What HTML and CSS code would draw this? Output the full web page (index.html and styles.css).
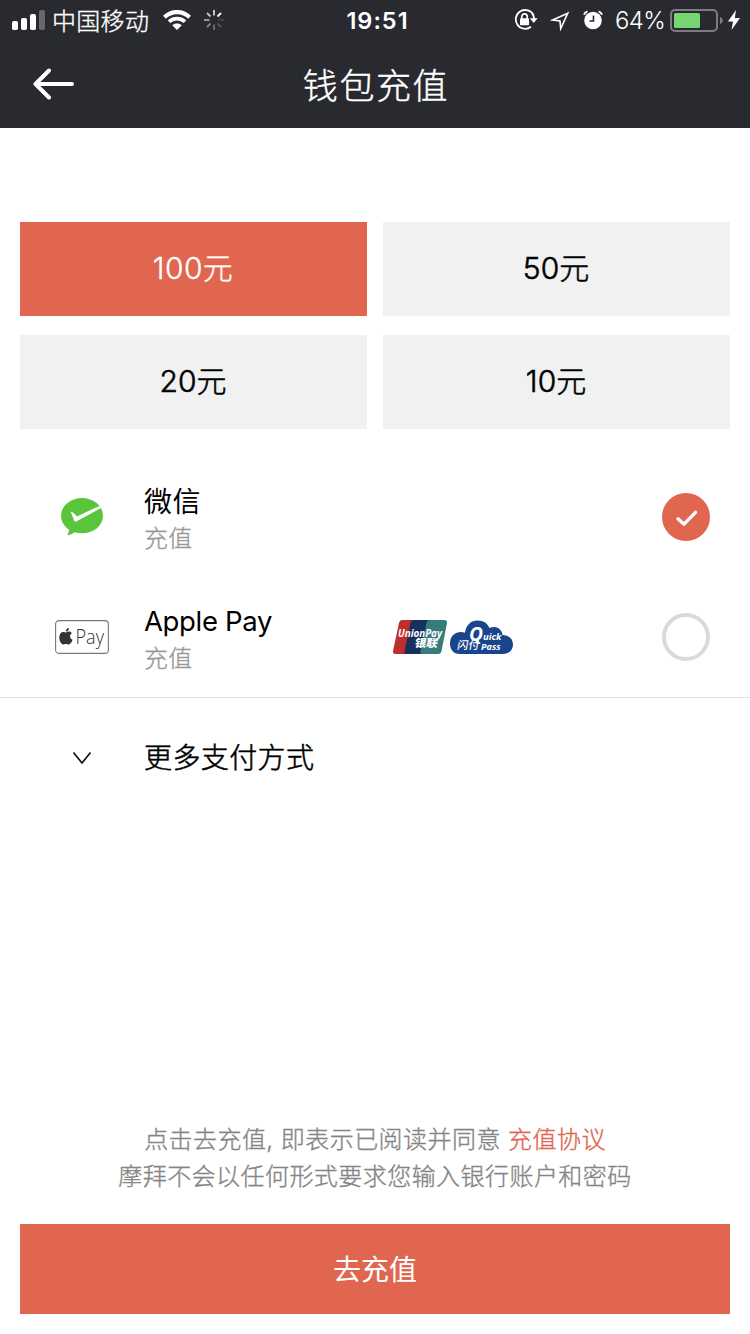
FILE: index.html
```
<!DOCTYPE html>
<html lang="zh-CN">
<head>
<meta charset="utf-8">
<title>钱包充值</title>
<link rel="stylesheet" href="styles.css">
</head>
<body>
<main class="screen">
  <header class="header">
    <div class="status">
      <div class="status-side">
        <svg class="signal" width="34" height="20" viewBox="0 0 34 20" fill="#fff"><rect x="0" y="11" width="6" height="9" rx="1.8"/><rect x="9" y="8" width="6" height="12" rx="1.8"/><rect x="18" y="4" width="6" height="16" rx="1.8"/><rect x="27" y="0" width="6" height="20" rx="1.8" fill="#67686c"/></svg>
        <span class="carrier">中国移动</span>
        <svg class="wifi" width="28" height="20" viewBox="0 0 28 20"><path d="M1.400 7.200C8.500 .3 19.500 .3 26.600 7.200" fill="none" stroke="#fff" stroke-width="4.200"/><path d="M6 11.600C10.500 7.600 17.500 7.600 22 11.600" fill="none" stroke="#fff" stroke-width="3.600"/><path d="M14 20L9.200 15.300C11.800 12.900 16.200 12.900 18.800 15.300Z" fill="#fff"/></svg>
        <svg class="spinner" width="20" height="20" viewBox="-10 -10 20 20" stroke="#fff" stroke-width="1.800"><path d="M0-10V-4.500" opacity=".8"/><path d="M7-7L3.500-3.500"/><path d="M10 0H4.500" opacity=".13"/><path d="M7 7L3.500 3.500" opacity=".2"/><path d="M0 10V4.500" opacity=".32"/><path d="M-7 7L-3.500 3.500" opacity=".43"/><path d="M-10 0H-4.500" opacity=".55"/><path d="M-7-7L-3.500-3.500" opacity=".72"/></svg>
      </div>
      <span class="clock">19:51</span>
      <div class="status-side status-right">
        <svg class="lock" width="24" height="22" viewBox="0 0 24 22"><path d="M19.600 6.200A9.400 9.400 0 1 0 17 17.800M18 4.200A9.400 9.400 0 0 1 20.100 10" fill="none" stroke="#fff" stroke-width="1.800"/><path d="M15.800 9.300H23.600L19.800 14Z" fill="#fff"/><rect x="6" y="9.300" width="9" height="7" rx=".8" fill="#fff"/><path d="M7.800 10V7.500A2.700 2.700 0 0 1 13.200 7.500V10" fill="none" stroke="#fff" stroke-width="1.700"/></svg>
        <svg class="location" width="20" height="21" viewBox="0 0 20 21"><path d="M17.800 3.200L2.500 10.100L10 11L10.700 18.600Z" fill="none" stroke="#fff" stroke-width="1.600" stroke-linejoin="miter"/></svg>
        <svg class="alarm" width="20" height="20" viewBox="0 0 20 20"><circle cx="10" cy="10.500" r="8.800" fill="#fff"/><path d="M1 4.700A5 5 0 0 1 4.500 1.400M15.500 1.400A5 5 0 0 1 19 4.700" fill="none" stroke="#fff" stroke-width="2"/><path d="M10.500 5.500V11H6.500" fill="none" stroke="#292a2f" stroke-width="1.600"/></svg>
        <span class="percent">64%</span>
        <svg class="battery" width="53" height="24" viewBox="0 0 53 24"><rect x="1" y="2" width="46" height="21" rx="4" fill="none" stroke="#7c7d80" stroke-width="2"/><rect x="4" y="5" width="26" height="15" rx="1.500" fill="#77d572"/><path d="M50 9C53.700 10 53.700 15 50 16Z" fill="#7c7d80"/></svg>
        <svg class="bolt" width="12" height="20" viewBox="0 0 12 20"><path d="M8 0L0 11.500H5L3.500 20L12 8H6.800Z" fill="#fff"/></svg>
      </div>
    </div>
    <div class="nav">
      <svg class="back" width="42" height="32" viewBox="0 0 42 32"><path d="M39 16H3M16 2.500L2.500 16L16 29.500" fill="none" stroke="#fff" stroke-width="4" stroke-linecap="round" stroke-linejoin="round"/></svg>
      <h1 class="title">钱包充值</h1>
    </div>
  </header>

  <section class="amounts">
    <button class="amount amount-active">100元</button>
    <button class="amount">50元</button>
    <button class="amount">20元</button>
    <button class="amount">10元</button>
  </section>

  <section class="methods">
    <div class="method">
      <div class="method-icon">
        <svg width="42" height="38" viewBox="0 0 42 38"><ellipse cx="21" cy="17.700" rx="21" ry="17.600" fill="#5ac43a"/><path d="M8 29Q8.500 33 6.500 37.500Q12 36 15.500 33Z" fill="#5ac43a"/><path d="M9.700 13.800Q12 13.600 16 18.500Q27 13 38.500 8L40 10L15.800 23.300Q14 24.500 13 22.300Z" fill="#fff"/></svg>
      </div>
      <div class="method-text"><span class="method-name">微信</span><span class="method-note">充值</span></div>
      <svg class="radio" width="48" height="48" viewBox="0 0 48 48"><circle cx="24" cy="24" r="24" fill="#e06650"/><path d="M16 25.800L22 31.200L33.500 19.300" fill="none" stroke="#fff" stroke-width="3.300" stroke-linecap="round" stroke-linejoin="round"/></svg>
    </div>
    <div class="method">
      <div class="method-icon">
        <svg width="54" height="34" viewBox="0 0 54 34"><rect x=".6" y=".6" width="52.800" height="32.800" rx="3.500" fill="#fff" stroke="#777" stroke-width="1.100"/><path d="M11.300 12.200C13 11.300 15.500 11.200 16.800 13.200C14.200 15 14.700 18.600 17.600 19.800C16.800 22 15.300 24.500 13.700 24.500C12.500 24.500 12.200 23.900 10.900 23.900C9.600 23.900 9.200 24.500 8.100 24.500C5.500 24.400 2.700 17.600 5.400 13.600C7.400 10.900 9.600 12.200 11 12.400Z" fill="#333"/><path d="M10.800 11.500C10.500 9.700 12.200 8 14 7.900C14.200 9.800 12.600 11.500 10.800 11.500Z" fill="#333"/><text class="apple-label" x="20.500" y="24" textLength="28.500" lengthAdjust="spacingAndGlyphs">Pay</text></svg>
      </div>
      <div class="method-text"><span class="method-name method-name-latin">Apple Pay</span><span class="method-note">充值</span></div>
      <svg class="brands" width="120" height="34" viewBox="0 0 120 34">
        <path d="M9 0H22L14 34H3Q-.6 34 0 31L6 3Q6.600 0 9 0Z" fill="#be2e2d"/>
        <path d="M21 0H38L30 34H13Q11 34 11.600 31L17.500 3Q18.200 0 21 0Z" fill="#17305f"/>
        <path d="M37 0H51Q54.600 0 54 3L48.500 31Q48 34 45 34H29Q27 34 27.600 31L33.500 3Q34 0 37 0Z" fill="#357c7d"/>
        <text class="brand-text" x="5" y="16.500" font-size="10" textLength="44" lengthAdjust="spacingAndGlyphs">UnionPay</text>
        <text class="brand-cjk" x="21" y="26.800" font-size="11" textLength="23" lengthAdjust="spacingAndGlyphs" transform="translate(5 0) skewX(-10)">银联</text>
        <path d="M67 34C60 34 57 29 57 23.500C57 17 61 12 68 12C69.500 12 70.500 12.200 72 12.700C73 5 78 .5 84.500 .5C91 .5 94.500 3.500 96.500 8C103 5 109 9 109.500 15C116 15 120 19 120 24.500C120 30 116 34 110 34Z" fill="#19458d"/>
        <text class="brand-text" x="76" y="20.500" font-size="19" textLength="14" lengthAdjust="spacingAndGlyphs">Q</text>
        <text class="brand-text" x="90" y="20" font-size="9" textLength="18.500" lengthAdjust="spacingAndGlyphs">uick</text>
        <text class="brand-cjk brand-cjk-light" x="64" y="29.500" font-size="11" textLength="22" lengthAdjust="spacingAndGlyphs" transform="translate(5 0) skewX(-10)">闪付</text>
        <text class="brand-text" x="88" y="30" font-size="8.500" textLength="19.500" lengthAdjust="spacingAndGlyphs">Pass</text>
      </svg>
      <svg class="radio" width="48" height="48" viewBox="0 0 48 48"><circle cx="24" cy="24" r="22" fill="#fff" stroke="#d8dadb" stroke-width="4"/></svg>
    </div>
  </section>

  <div class="more">
    <div class="method-icon"><svg width="20" height="14" viewBox="0 0 20 14"><path d="M1.500 1.500L10 12L18.500 1.500" fill="none" stroke="#111" stroke-width="1.700"/></svg></div>
    <span class="more-text">更多支付方式</span>
  </div>

  <footer class="footer">
    <p class="terms">点击去充值, 即表示已阅读并同意 <a class="terms-link">充值协议</a></p>
    <p class="terms">摩拜不会以任何形式要求您输入银行账户和密码</p>
    <button class="submit">去充值</button>
  </footer>
</main>
</body>
</html>
```
FILE: styles.css
```
* { box-sizing: border-box; }
body { margin: 0; background: #fff; color: #000; font-family: Inter, "Noto Sans CJK SC", sans-serif; }
svg { display: block; flex: none; }
button { border: 0; padding: 0; margin: 0; font-family: inherit; color: inherit; }
.screen { width: 750px; height: 1334px; display: flex; flex-direction: column; overflow: hidden; }
.header { height: 128px; background: #292a2f; color: #fff; flex: none; }
.status { height: 40px; display: grid; grid-template-columns: 300px 1fr 300px; grid-template-rows: 40px; align-items: center; }
.status-side { display: flex; align-items: center; height: 40px; padding-left: 12px; }
.status-right { justify-content: flex-end; padding: 0 10px 0 0; }
.carrier { font-size: 24px; line-height: 40px; letter-spacing: .3px; font-weight: 300; -webkit-text-stroke: .35px; width: 98px; margin-left: 6px; padding-top: 3px; white-space: nowrap; }
.wifi { margin-left: 13px; }
.spinner { margin-left: 13px; }
.clock { text-align: center; font-size: 23.5px; font-weight: 600; letter-spacing: 1px; line-height: 40px; padding: 2px 0 0 5px; }
.location { margin-left: 12px; }
.alarm { margin-left: 13px; }
.percent { font-size: 24px; font-weight: 350; letter-spacing: -.7px; width: 50px; margin-left: 12px; padding-top: 2px; line-height: 40px; white-space: nowrap; }
.battery { margin-left: 5px; }
.bolt { margin-left: 5px; }
.nav { height: 88px; display: grid; grid-template-columns: 100px 1fr 100px; grid-template-rows: 88px; align-items: center; }
.back { margin-left: 33px; }
.title { margin: 0; font-size: 35px; line-height: 88px; letter-spacing: 1.6px; font-weight: 300; -webkit-text-stroke: .4px; text-align: center; padding: 4px 0 0 2px; }
.amounts { margin: 94px 20px 0; display: grid; grid-template-columns: 1fr 1fr; grid-auto-rows: 94px; gap: 19px 16px; flex: none; }
.amount { background: #f1f1f1; font-size: 30px; line-height: 92px; padding: 0 1px 2px 0; font-weight: 300; -webkit-text-stroke: .55px; }
.amount-active { background: #e06650; color: #fff; letter-spacing: .4px; -webkit-text-stroke: .35px; }
.methods { padding-top: 28px; border-bottom: 1px solid #e2e2e2; flex: none; }
.method { height: 120px; padding: 0 40px 0 20px; display: flex; align-items: center; }
.method-icon { width: 124px; display: flex; justify-content: center; flex: none; }
.method-text { flex: 1; display: flex; flex-direction: column; padding-top: 3px; }
.method-name { font-size: 28px; line-height: 40px; letter-spacing: .4px; }
.method-name-latin { font-size: 27.5px; line-height: 38px; padding-bottom: 2px; letter-spacing: -.35px; }
.method-note { font-size: 24px; line-height: 34px; letter-spacing: .3px; font-weight: 300; -webkit-text-stroke: .35px; color: #999; }
.brands { margin-right: 149px; }
.apple-label { font-family: "Open Sans", sans-serif; font-size: 20px; font-weight: 300; fill: #333; }
.brand-text { font-family: "Open Sans", sans-serif; font-weight: 700; font-style: italic; fill: #fff; }
.brand-cjk { font-family: "Noto Sans CJK SC", sans-serif; font-weight: 900; fill: #fff; }
.brand-cjk-light { font-weight: 500; }
.more { height: 120px; padding-left: 20px; display: flex; align-items: center; }
.more-text { font-size: 28px; line-height: 40px; letter-spacing: .4px; font-weight: 300; -webkit-text-stroke: .55px; }
.footer { margin-top: auto; padding: 0 20px 20px; text-align: center; }
.terms { margin: 0; font-size: 24px; line-height: 37px; letter-spacing: .45px; font-weight: 300; -webkit-text-stroke: .35px; color: #858585; white-space: nowrap; }
.terms-link { color: #e06650; }
.submit { display: block; width: 100%; height: 90px; margin-top: 29px; padding-bottom: 2px; background: #e06650; color: #fff; font-size: 28px; font-weight: 400; }
```
